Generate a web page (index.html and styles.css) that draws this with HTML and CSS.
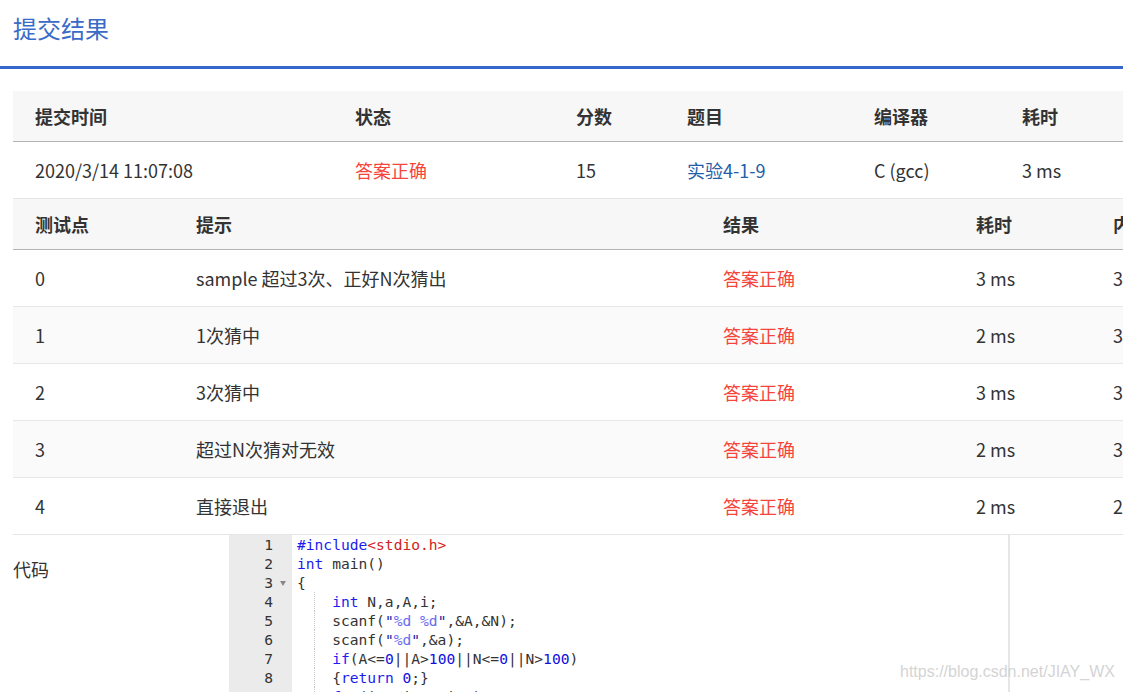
FILE: index.html
```html
<!DOCTYPE html>
<html lang="zh-CN">
<head>
<meta charset="utf-8">
<title>提交结果</title>
<link rel="stylesheet" href="styles.css">
</head>
<body>
<div class="page">
  <header class="title-bar">
    <h1 class="title">提交结果</h1>
  </header>
  <main class="content">
    <table class="tbl summary">
      <colgroup>
        <col class="c320"><col class="c221"><col class="c111"><col class="c187"><col class="c148"><col class="c150"><col class="c150">
      </colgroup>
      <thead>
        <tr><th>提交时间</th><th>状态</th><th>分数</th><th>题目</th><th>编译器</th><th>耗时</th><th>内存</th></tr>
      </thead>
      <tbody>
        <tr><td>2020/3/14 11:07:08</td><td class="ok">答案正确</td><td>15</td><td><a class="link" href="#">实验4-1-9</a></td><td>C (gcc)</td><td>3 ms</td><td>324 KB</td></tr>
      </tbody>
    </table>
    <table class="tbl cases">
      <colgroup>
        <col class="c161"><col class="c527"><col class="c253"><col class="c137"><col class="c150">
      </colgroup>
      <thead>
        <tr><th>测试点</th><th>提示</th><th>结果</th><th>耗时</th><th>内存</th></tr>
      </thead>
      <tbody>
        <tr><td>0</td><td>sample 超过3次、正好N次猜出</td><td class="ok">答案正确</td><td>3 ms</td><td>324 KB</td></tr>
        <tr class="alt"><td>1</td><td>1次猜中</td><td class="ok">答案正确</td><td>2 ms</td><td>316 KB</td></tr>
        <tr><td>2</td><td>3次猜中</td><td class="ok">答案正确</td><td>3 ms</td><td>320 KB</td></tr>
        <tr class="alt"><td>3</td><td>超过N次猜对无效</td><td class="ok">答案正确</td><td>2 ms</td><td>312 KB</td></tr>
        <tr><td>4</td><td>直接退出</td><td class="ok">答案正确</td><td>2 ms</td><td>256 KB</td></tr>
      </tbody>
    </table>
    <section class="code-row">
      <div class="code-label">代码</div>
      <div class="editor">
        <div class="gutter">
          <div class="gl">1</div>
          <div class="gl">2</div>
          <div class="gl fold">3</div>
          <div class="gl">4</div>
          <div class="gl">5</div>
          <div class="gl">6</div>
          <div class="gl">7</div>
          <div class="gl">8</div>
          <div class="gl">9</div>
        </div>
        <pre class="code"><span class="kw">#include</span><span class="inc">&lt;stdio.h&gt;</span>
<span class="kw">int</span> main()
{
<span class="ind">    </span><span class="kw">int</span> N,a,A,i;
<span class="ind">    </span>scanf(<span class="str">"<span class="esc">%d</span> <span class="esc">%d</span>"</span>,&amp;A,&amp;N);
<span class="ind">    </span>scanf(<span class="str">"<span class="esc">%d</span>"</span>,&amp;a);
<span class="ind">    </span><span class="kw">if</span>(A&lt;=<span class="num">0</span>||A&gt;<span class="num">100</span>||N&lt;=<span class="num">0</span>||N&gt;<span class="num">100</span>)
<span class="ind">    </span>{<span class="kw">return</span> <span class="num">0</span>;}
<span class="ind">    </span><span class="kw">for</span>(i=<span class="num">1</span>;i&lt;=N;i++)</pre>
      </div>
    </section>
  </main>
  <div class="watermark">https://blog.csdn.net/JIAY_WX</div>
</div>
</body>
</html>
```
FILE: styles.css
```css
html, body {
  margin: 0;
  padding: 0;
  background: #fff;
  overflow: hidden;
}
body {
  font-family: "Noto Sans CJK SC", "Noto Sans", sans-serif;
  color: #333;
}
.page {
  position: relative;
  width: 1123px;
  height: 692px;
  overflow: hidden;
}
.title-bar {
  height: 66px;
  border-bottom: 3px solid #3367cc;
  box-sizing: content-box;
}
.title {
  margin: 0;
  padding: 10px 0 0 13px;
  font-size: 24px;
  line-height: 36px;
  font-weight: normal;
  color: #3a6bc8;
}
.content {
  padding: 22px 0 0 13px;
}
.tbl {
  border-collapse: collapse;
  table-layout: fixed;
  font-size: 18px;
}
.summary { width: 1287px; }
.cases { width: 1228px; }
.c320 { width: 320px; }
.c221 { width: 221px; }
.c111 { width: 111px; }
.c187 { width: 187px; }
.c148 { width: 148px; }
.c150 { width: 150px; }
.c161 { width: 161px; }
.c527 { width: 527px; }
.c253 { width: 253px; }
.c137 { width: 137px; }
.tbl th {
  background: #f7f7f7;
  height: 50px;
  padding: 0 0 0 22px;
  text-align: left;
  font-weight: bold;
  color: #333;
  border-bottom: 1px solid #b3b3b3;
  white-space: nowrap;
  overflow: hidden;
}
.tbl td {
  height: 56px;
  padding: 0 0 0 22px;
  border-bottom: 1px solid #e6e6e6;
  white-space: nowrap;
  overflow: hidden;
}
.tbl tr.alt td { background: #fafafa; }
.ok { color: #f5443a; }
.link { color: #1f5ea8; text-decoration: none; }

.code-row {
  display: flex;
  align-items: flex-start;
}
.code-label {
  width: 216px;
  flex: none;
  padding-top: 21px;
  font-size: 18px;
  line-height: 26px;
  color: #333;
}
.editor {
  display: flex;
  width: 779px;
  height: 200px;
  border-right: 2px solid #e6e6e6;
  font-family: "DejaVu Sans Mono", "Liberation Mono", monospace;
  font-size: 14.6px;
  line-height: 19px;
}
.gutter {
  width: 63px;
  flex: none;
  background: #ebebeb;
  padding-top: 0;
  color: #333;
  text-align: right;
  box-sizing: border-box;
  padding-right: 19px;
  height: 200px;
}
.gl {
  position: relative;
  height: 19px;
}
.fold::after {
  content: "";
  position: absolute;
  right: -13px;
  top: 8px;
  border-left: 3.5px solid transparent;
  border-right: 3.5px solid transparent;
  border-top: 5px solid #888;
}
.code {
  margin: 0;
  padding: 0 0 0 5px;
  font: inherit;
  color: #333;
}
.kw { color: #1c1cf0; }
.inc { color: #d0211a; }
.str { color: #1a1aa6; }
.esc { color: #6a6af0; }
.num { color: #1010e0; }
.ind {
  display: inline-block;
  vertical-align: top;
  height: 19px;
  background-image: repeating-linear-gradient(to bottom, #c8c8c8 0 1px, transparent 1px 2px);
  background-size: 1px 100%;
  background-position: 17px 0;
  background-repeat: no-repeat;
}
.watermark {
  position: absolute;
  left: 900px;
  top: 663px;
  font-family: "Liberation Sans", Arial, sans-serif;
  font-size: 16px;
  color: #d4d4d4;
  white-space: nowrap;
}
```
